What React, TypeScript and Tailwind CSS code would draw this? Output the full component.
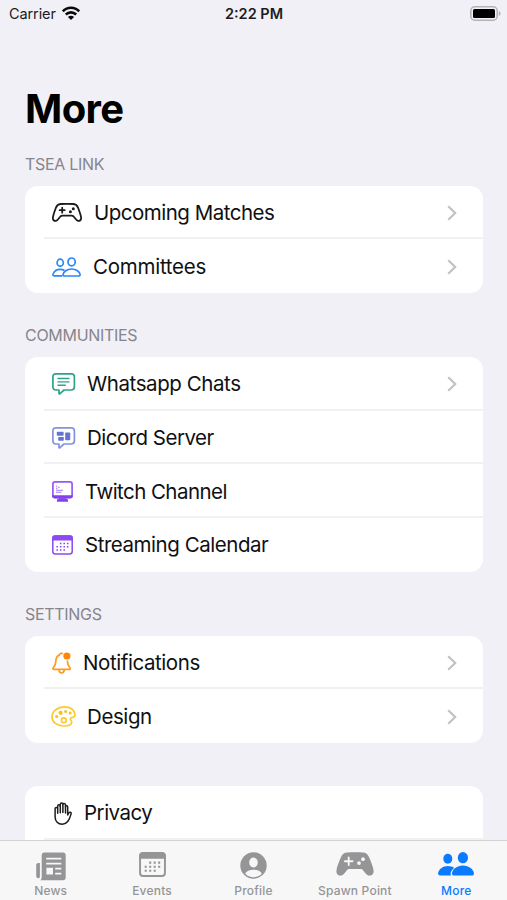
import type { ReactNode } from "react";

type Row = {
    label: string;
    icon: ReactNode;
    labelClass: string;
    chevron?: boolean;
};

const ControllerIcon = () => (
    <svg className="w-[30px] h-[19px]" viewBox="0 0 30 19" fill="none" stroke="#1c1c1e" strokeWidth="1.800" strokeLinecap="round" strokeLinejoin="round">
        <path d="M8.500 1C11 .8 19 .8 21.500 1C24 1.200 25.200 2.400 26 4.600C27.300 8 28.700 11.500 29.100 14.600C29.400 17 27.800 18.200 26 17.900C24.200 17.600 22.500 14.300 21.300 13.200C20.800 12.800 20.300 12.700 19.600 12.700H10.400C9.700 12.700 9.200 12.800 8.700 13.200C7.500 14.300 5.800 17.600 4 17.900C2.200 18.200 .6 17 .9 14.600C1.300 11.500 2.700 8 4 4.600C4.800 2.400 6 1.200 8.500 1Z" />
        <path d="M10.200 4.700V9.700M7.700 7.200H12.700" />
        <circle cx="18.400" cy="8.800" r="1.500" fill="#1c1c1e" stroke="none" />
        <circle cx="21.300" cy="5.800" r="1.500" fill="#1c1c1e" stroke="none" />
    </svg>
);

const PeopleIcon = () => (
    <svg className="w-[29px] h-[20px]" viewBox="0 0 29 20" fill="none" stroke="#2b88f5" strokeWidth="1.700" strokeLinejoin="round">
        <ellipse cx="8.200" cy="5.700" rx="3.100" ry="3.500" />
        <ellipse cx="19.600" cy="4.900" rx="3.600" ry="3.900" />
        <path d="M10.400 18.900H2C.9 18.900 .7 17.900 1.100 17C2.200 14.200 4.700 12.300 8.200 12.300C9.900 12.300 11.300 12.700 12.500 13.500" />
        <path d="M19.600 12C15 12 11.300 14.800 11.100 17.500C11 18.500 11.500 19 12.600 19H26.500C27.600 19 28.200 18.500 28.100 17.500C27.800 14.800 24.200 12 19.600 12Z" />
    </svg>
);

const bubblePath = "M4 .9H19.200C21.300 .9 22.400 2 22.400 4.100V13.800C22.400 15.900 21.300 17 19.200 17H12L8 20.600C7.500 21.100 7 20.900 7 20.200V17H4C1.900 17 .9 15.900 .9 13.800V4.100C.9 2 1.900 .9 4 .9Z";

const ChatIcon = () => (
    <svg className="w-[24px] h-[22px]" viewBox="0 0 24 22" fill="none" stroke="#2fa28a" strokeWidth="1.700" strokeLinejoin="round">
        <path d={bubblePath} />
        <path d="M6 5.500H17M6 8.900H17M6 12.300H13.300" strokeWidth="1.400" strokeLinecap="round" />
    </svg>
);

const DiscordIcon = () => (
    <svg className="w-[24px] h-[22px]" viewBox="0 0 24 22" fill="none" stroke="#8493e0" strokeWidth="1.700" strokeLinejoin="round">
        <path d={bubblePath} />
        <g fill="#6474d2" stroke="none">
            <rect x="4.800" y="4.700" width="6.800" height="4" rx=".7" />
            <rect x="13.200" y="5.600" width="5" height="7.600" rx=".7" />
            <rect x="6.200" y="9.900" width="5.600" height="3.800" rx=".7" />
        </g>
    </svg>
);

const MonitorIcon = () => (
    <svg className="w-[21px] h-[21px]" viewBox="0 0 21 21" fill="none">
        <rect x=".9" y=".9" width="19.200" height="15.500" rx="2.200" stroke="#9658f5" strokeWidth="1.700" />
        <path d="M.1 14.200H20.900V15C20.900 16.600 19.900 17.500 18.200 17.500H2.800C1.100 17.500 .1 16.600 .1 15Z" fill="#8440f0" />
        <path d="M6.500 17.200H14.500V18.300H16V20.700H5V18.300H6.500Z" fill="#8440f0" />
        <path d="M4 5.300H5.200M6 6.200H7.600M4 7.300H5.500M4 9.300H11M4 11.200H9.500" stroke="#a878f5" strokeWidth="1.100" />
    </svg>
);

// shared by the list row and the Events tab
const CalendarIcon = ({ className }: { className: string }) => (
    <svg className={className} viewBox="0 0 21 19.500" fill="none">
        <rect x=".8" y=".8" width="19.400" height="17.900" rx="2.400" stroke="currentColor" strokeWidth="1.500" />
        <path d="M.1 5.200V3C.1 1.200 1.200 .1 3 .1H18C19.800 .1 20.900 1.200 20.900 3V5.200Z" fill="currentColor" />
        <path
            d="M7.900 8.300H9.500M11.400 8.300H13M14.900 8.300H16.500M4.400 11.500H6M7.900 11.500H9.500M11.400 11.500H13M14.900 11.500H16.500M4.400 14.700H6M7.900 14.700H9.500M11.400 14.700H13"
            stroke="currentColor"
            strokeWidth="1.600"
        />
    </svg>
);

const BellIcon = () => (
    <svg className="w-[20px] h-[22px]" viewBox="0 0 20 22" fill="none" stroke="#ff9a1f" strokeWidth="1.700" strokeLinecap="round" strokeLinejoin="round">
        <path d="M10.200 1.500C8.900 .8 7.800 1.600 7.500 2.900C5.100 3.800 4 6 3.900 8.700C3.800 12.300 3.200 13.700 1.500 15.500C.6 16.500 .8 17.400 2 17.400H17.200C18.400 17.400 18.600 16.500 17.700 15.500C16.100 13.900 15.500 12.200 15.400 9" />
        <path d="M7 18C7.100 19.700 8 20.800 9.600 20.800C11.200 20.800 12.100 19.700 12.200 18" />
        <circle cx="14.900" cy="4" r="3.600" fill="#ff860a" stroke="none" />
    </svg>
);

const PaletteIcon = () => (
    <svg className="w-[25px] h-[21px] -ml-px" viewBox="0 0 25 21" fill="none" stroke="#fccb2b" strokeWidth="1.700">
        <path d="M23.900 8.600C23.600 4 19.500 .9 13.600 .9C6.700 .9 1 5.100 1 10.700C1 16 6 20 12.700 20C17.200 20 20.700 18.700 20.700 16.200C20.700 14.500 19.300 14 19.300 12.700C19.300 11.600 20.300 11.500 21.600 11.300C23.200 11.100 24.100 10.300 23.900 8.600Z" />
        <circle cx="12.800" cy="14.200" r="2.400" />
        <g fill="#fcbf14" stroke="none">
            <circle cx="5.700" cy="10.500" r="1.600" />
            <circle cx="9.600" cy="6.800" r="2.100" />
            <circle cx="14.600" cy="5.500" r="1.500" />
            <circle cx="19.100" cy="6.900" r="1.500" />
        </g>
    </svg>
);

const HandIcon = () => (
    <svg className="w-[18px] h-[23px] ml-[2px]" viewBox="0 0 18 23" fill="none" stroke="#1c1c1e" strokeWidth="1.500" strokeLinecap="round" strokeLinejoin="round">
        <path d="M3.700 11.300V4.200C3.700 2.300 6.300 2.300 6.300 4.200V2.500C6.300 .5 8.900 .5 8.900 2.500C8.900 .9 11.500 1 11.500 3.100V4.800C11.500 3.200 13.700 3.200 13.700 5V13C14.200 12 14.700 10.900 15.300 10.500C16.300 9.900 17.500 10.500 17.100 11.900C16.400 14.400 15.400 17.300 13.700 19.500C12.300 21.300 10.700 22.200 8.300 22.200C4 22.200 1.100 19.400 1.100 14.700V6.800C1.100 4.900 3.700 4.900 3.700 6.800" />
        <path d="M6.300 4V10.800M8.900 2.800V10.600M11.500 4.800V11" />
    </svg>
);

const NewsTabIcon = () => (
    <svg className="w-[30px] h-[29px]" viewBox="0 0 30 29" fill="currentColor">
        <path d="M2.600 11H3.900V24.500C3.900 25.500 3.200 26.300 2.200 26.300C1 26.300 .2 25.300 .2 23.800V13.400C.2 11.800 1 11 2.600 11Z" />
        <path fillRule="evenodd" d="M8.400 .5H27C28.700 .5 29.700 1.500 29.700 3.200V25.500C29.700 27.300 28.700 28.300 27 28.300H4.200C5.200 27.600 5.700 26.500 5.700 25V3.200C5.700 1.500 6.700 .5 8.400 .5ZM10.200 5.800V7.600H25.300V5.800ZM10.200 10.700V12.500H25.300V10.700ZM10.400 15.800V22.500H17V15.800ZM19.200 15.800V17.500H25.300V15.800ZM19.200 20.800V22.500H25.300V20.800Z" />
    </svg>
);

const ProfileTabIcon = () => (
    <svg className="w-[27px] h-[27px]" viewBox="0 0 27 27">
        <circle cx="13.500" cy="13.500" r="13.200" fill="currentColor" />
        <ellipse cx="13.500" cy="10.500" rx="4.300" ry="4.900" fill="#f7f7f8" />
        <path d="M5.200 21.800C6.300 19.100 9.500 17.800 13.500 17.800S20.700 19.100 21.800 21.800C19.500 24.100 16.600 25.200 13.500 25.200S7.500 24.100 5.200 21.800Z" fill="#f7f7f8" />
    </svg>
);

const ControllerTabIcon = () => (
    <svg className="w-[38px] h-[24px]" viewBox="0 0 38 24" fill="none">
        <path d="M10.500 .5C13.500 0 24.500 0 27.500 .5C30.800 1 32.100 2.800 33.200 5.600C34.900 9.800 37.200 14.800 37.600 18.800C37.900 22 35.800 23.900 33.400 23.600C30.500 23.200 28.500 19.800 26.900 17.900C26.300 17.200 25.700 17 24.900 17H13.100C12.300 17 11.700 17.200 11.100 17.900C9.500 19.800 7.500 23.200 4.600 23.600C2.200 23.900 .1 22 .4 18.800C.8 14.800 3.100 9.800 4.800 5.600C5.900 2.800 7.200 1 10.500 .5Z" fill="currentColor" />
        <path d="M12.700 5.400V13M8.900 9.200H16.500" stroke="#f7f7f8" strokeWidth="1.900" strokeLinecap="round" />
        <circle cx="27" cy="7.200" r="1.900" fill="#f7f7f8" />
        <circle cx="23" cy="11.100" r="1.900" fill="#f7f7f8" />
    </svg>
);

const PeopleTabIcon = () => (
    <svg className="w-[36px] h-[24px]" viewBox="0 0 36 24" fill="currentColor">
        <ellipse cx="9.800" cy="6.800" rx="4.500" ry="5" />
        <ellipse cx="24.900" cy="5.700" rx="5.100" ry="5.600" />
        <path d="M12.900 23.500H2C.4 23.500 -.2 22.300 .2 20.700C1.200 16.800 5 14 9.800 14C12.500 14 14.500 14.700 16.200 15.900C13.500 17.800 12 20.600 12.900 23.500Z" />
        <path d="M24.900 13.500C18.800 13.500 14.300 17.300 14 21.300C13.900 22.800 14.700 23.600 16.300 23.600H33.600C35.200 23.600 36 22.800 35.900 21.300C35.500 17.300 31 13.500 24.900 13.500Z" />
    </svg>
);

const sections: { title: string; rows: Row[] }[] = [
    {
        title: "TSEA LINK",
        rows: [
            { label: "Upcoming Matches", icon: <ControllerIcon />, labelClass: "tracking-[-0.5px]", chevron: true },
            { label: "Committees", icon: <PeopleIcon />, labelClass: "tracking-[-0.25px]", chevron: true },
        ],
    },
    {
        title: "COMMUNITIES",
        rows: [
            { label: "Whatsapp Chats", icon: <ChatIcon />, labelClass: "-ml-px tracking-[-0.42px]", chevron: true },
            { label: "Dicord Server", icon: <DiscordIcon />, labelClass: "-ml-px tracking-[-0.52px]" },
            { label: "Twitch Channel", icon: <MonitorIcon />, labelClass: "tracking-[-0.55px]" },
            { label: "Streaming Calendar", icon: <CalendarIcon className="w-[21px] h-[20px] text-[#8a4af0]" />, labelClass: "tracking-[-0.46px]" },
        ],
    },
    {
        title: "SETTINGS",
        rows: [
            { label: "Notifications", icon: <BellIcon />, labelClass: "-ml-px tracking-[-0.42px]", chevron: true },
            { label: "Design", icon: <PaletteIcon />, labelClass: "-ml-px tracking-[-0.4px]", chevron: true },
        ],
    },
];

const tabs = [
    { label: "News", icon: <NewsTabIcon /> },
    { label: "Events", icon: <CalendarIcon className="w-[27px] h-[25px]" /> },
    { label: "Profile", icon: <ProfileTabIcon /> },
    { label: "Spawn Point", icon: <ControllerTabIcon /> },
    { label: "More", icon: <PeopleTabIcon />, active: true },
];

const ListRow = ({ row, divider }: { row: Row; divider: boolean }) => (
    <div className="flex h-[53.700px] pl-[19px]">
        <div className={`flex flex-1 items-center gap-3 pl-2 pr-[26px] ${divider ? "border-b-2 border-[#f1f1f3] pt-[3px]" : "pt-px"}`}>
            {row.icon}
            <span className={`text-[20.500px] leading-6 text-[#101012] whitespace-nowrap ${row.labelClass}`}>{row.label}</span>
            {row.chevron && (
                <svg className="ml-auto w-[10px] h-[16px]" viewBox="0 0 10 16" fill="none" stroke="#c2c2c5" strokeWidth="2.200">
                    <path d="M1.200 1.200L8.200 8L1.200 14.800" />
                </svg>
            )}
        </div>
    </div>
);

const StatusBar = () => (
    <div className="grid grid-cols-3 items-center h-7 pl-[9px] pr-[6px] text-[14.500px] text-[#1c1c1e]">
        <div className="flex items-center gap-[6px]">
            <span className="tracking-[-0.1px]">Carrier</span>
            <svg className="w-[18px] h-[14px] -mt-[2px]" viewBox="0 0 18 14" fill="none" stroke="#0a0a0a" strokeWidth="2.600">
                <path d="M.8 5.300C5.300 .5 12.700 .5 17.200 5.300" />
                <path d="M3.800 8.500C6.700 5.600 11.300 5.600 14.200 8.500" />
                <path d="M9 13.900L5.900 10.900C7.600 9.300 10.400 9.300 12.100 10.900Z" fill="#0a0a0a" stroke="none" />
            </svg>
        </div>
        <span className="-ml-[2px] text-center font-semibold whitespace-nowrap">2:22 PM</span>
        <svg className="justify-self-end w-[31px] h-[15px] -mt-[2px]" viewBox="0 0 31 15">
            <rect x=".8" y=".8" width="26.400" height="13.400" rx="4" fill="none" stroke="#b4b4b7" strokeWidth="1.600" />
            <rect x="3" y="3" width="22" height="9" rx="1.500" fill="#000" />
            <path d="M28.800 5C31 5.800 31 9.200 28.800 10Z" fill="#aeaeb1" />
        </svg>
    </div>
);

const App = () => {
    return (
        <div className="flex flex-col w-[507px] h-[900px] overflow-hidden bg-[#f1f0f6] font-['Inter',sans-serif]">
            <StatusBar />
            <main className="flex-1 min-h-0 overflow-hidden pl-[25px] pr-[24px]">
                <h1 className="mt-[57px] h-12 text-[40px] leading-[48px] font-bold text-black tracking-[-0.600px]">More</h1>
                {sections.map((section, i) => (
                    <section key={section.title} className={i === 0 ? "mt-[21px]" : "mt-[32.500px]"}>
                        <h2 className="h-5 text-[16px] leading-5 text-[#86858b] tracking-[-0.300px]">{section.title}</h2>
                        <div className="mt-[11.500px] rounded-[13px] bg-white">
                            {section.rows.map((row, j) => (
                                <ListRow key={row.label} row={row} divider={j < section.rows.length - 1} />
                            ))}
                        </div>
                    </section>
                ))}
                <div className="mt-[43px] rounded-t-[13px] bg-white">
                    <ListRow row={{ label: "Privacy", icon: <HandIcon />, labelClass: "tracking-[-0.5px]" }} divider />
                </div>
            </main>
            <nav className="grid grid-cols-5 h-[60px] border-t border-[#d4d4d6] bg-[#f7f7f8]">
                {tabs.map((tab) => (
                    <button key={tab.label} className={`flex flex-col items-center ${tab.active ? "text-[#0a7bff]" : "text-[#959597]"}`}>
                        <span className="flex h-[42px] pt-[11px]">{tab.icon}</span>
                        <span className="text-[12px] leading-4 font-medium tracking-[0.2px] whitespace-nowrap">{tab.label}</span>
                    </button>
                ))}
            </nav>
        </div>
    );
};

export default App;
